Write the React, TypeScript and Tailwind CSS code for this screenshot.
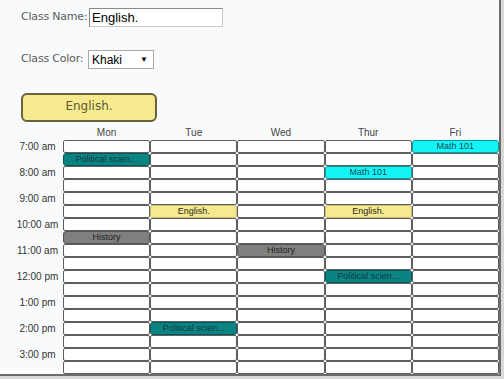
import React from "react";

const days = ["Mon", "Tue", "Wed", "Thur", "Fri"];
const hours = ["7:00 am", "8:00 am", "9:00 am", "10:00 am", "11:00 am", "12:00 pm", "1:00 pm", "2:00 pm", "3:00 pm"];

type Ev = { label: string; cls: string };

const teal = "bg-[#0b8383] border-[#075858] text-[#0c3d3d]";
const cyan = "bg-[#13f4f4] border-[#0a9a9a] text-[#17495a]";
const khaki = "bg-[#f6e98f] border-[#c8bb6a] text-[#2a2a1a]";
const gray = "bg-[#7f7f7f] border-[#555] text-[#1e1e1e]";

// key: day-row (row 0 = 7:00, each row is half an hour)
const events: Record<string, Ev> = {
  "Mon-1": { label: "Political scien...", cls: teal },
  "Fri-0": { label: "Math 101", cls: cyan },
  "Thur-2": { label: "Math 101", cls: cyan },
  "Tue-5": { label: "English.", cls: khaki },
  "Thur-5": { label: "English.", cls: khaki },
  "Mon-7": { label: "History", cls: gray },
  "Wed-8": { label: "History", cls: gray },
  "Thur-10": { label: "Political scien...", cls: teal },
  "Tue-14": { label: "Political scien...", cls: teal },
};

export default function App() {
  const rows = Array.from({ length: 18 }, (_, i) => i);

  return (
    <div className="w-[504px] h-[379px] bg-[#d9d9d9] overflow-hidden">
      <div className="w-[501px] h-[376px] bg-[#f9fafc] border-r-2 border-b-2 border-[#6b6b6b] overflow-hidden font-['Liberation_Sans',Arial,sans-serif]">
        {/* Form */}
        <div className="pl-[21px] pt-[8px]">
          <div className="flex items-center h-[19px]">
            <span className="w-[68px] text-[11px] text-[#5a5a5a] font-['DejaVu_Sans',Verdana,sans-serif] tracking-[-0.2px]">
              Class Name:
            </span>
            <div className="w-[134px] h-[19px] bg-white border border-[#c8c8c8] border-t-[#8a8a8a] border-l-[#8a8a8a] pl-[2px] text-[13px] leading-[17px] text-black">
              English.
            </div>
          </div>

          <div className="flex items-center h-[19px] mt-[23px]">
            <span className="w-[67px] text-[11px] text-[#5a5a5a] font-['DejaVu_Sans',Verdana,sans-serif] tracking-[-0.2px]">
              Class Color:
            </span>
            <div className="w-[66px] h-[19px] bg-white border border-[#a9a9a9] flex items-center justify-between pl-[3px] pr-[5px] text-[12px] text-black">
              <span>Khaki</span>
              <span className="text-[8px]">▼</span>
            </div>
          </div>

          <div className="mt-[24px] w-[136px] h-[29px] bg-[#f7ea8e] border-2 border-[#66633f] rounded-[6px] flex justify-center pt-[2px] text-[12px] text-[#5b5a3c] font-['DejaVu_Sans',Verdana,sans-serif]">
            English.
          </div>
        </div>

        {/* Schedule grid */}
        <div className="mt-[3px] grid grid-cols-[63px_repeat(5,87.2px)]">
          <div className="h-[15px]" />
          {days.map((d) => (
            <div key={d} className="h-[15px] text-center text-[10px] leading-[15px] text-[#444]">
              {d}
            </div>
          ))}

          {rows.map((r) => (
            <React.Fragment key={r}>
              <div className="h-[13px] text-center pl-[12px] text-[10px] leading-[13px] text-[#333]">
                {r % 2 === 0 ? hours[r / 2] : ""}
              </div>
              {days.map((d) => {
                const ev = events[`${d}-${r}`];
                return ev ? (
                  <div
                    key={d}
                    className={`h-[13px] border rounded-[3px] text-center text-[9px] leading-[11px] truncate ${ev.cls}`}
                  >
                    {ev.label}
                  </div>
                ) : (
                  <div key={d} className="h-[13px] bg-white border border-[#5e5e5e] rounded-[2px]" />
                );
              })}
            </React.Fragment>
          ))}
        </div>
      </div>
    </div>
  );
}
